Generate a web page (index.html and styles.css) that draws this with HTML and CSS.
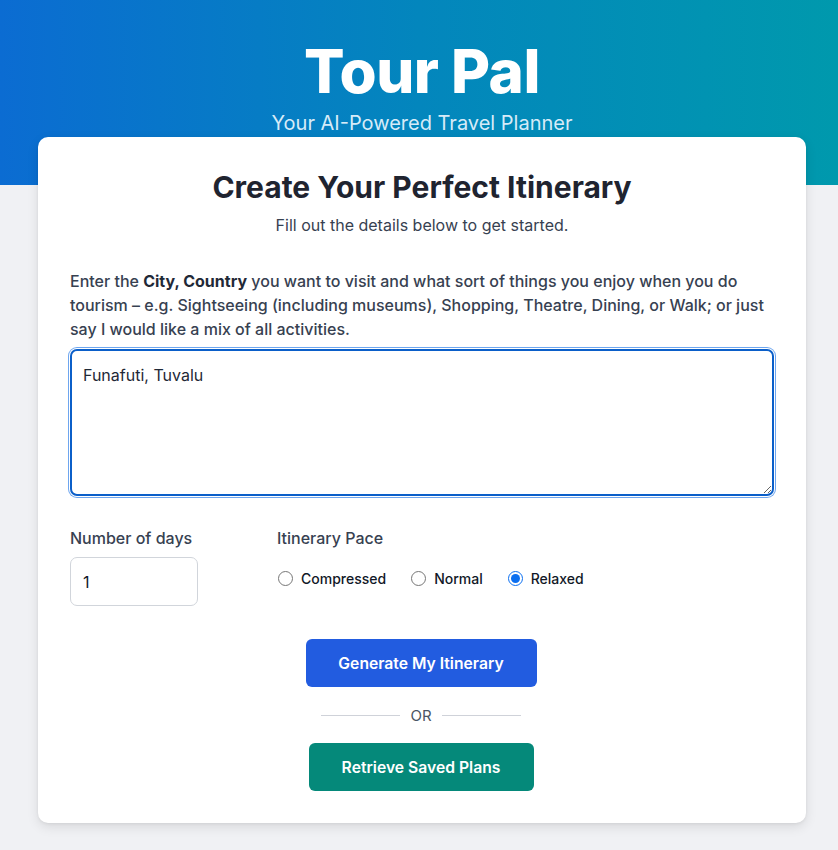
FILE: index.html
```html
<!DOCTYPE html>
<html lang="en">
<head>
<meta charset="utf-8">
<title>Tour Pal</title>
<link rel="stylesheet" href="styles.css">
</head>
<body>
<header class="hero">
  <h1 class="brand">Tour Pal</h1>
  <p class="tagline">Your AI-Powered Travel Planner</p>
</header>
<main class="card">
  <h2 class="card-title">Create Your Perfect Itinerary</h2>
  <p class="card-sub">Fill out the details below to get started.</p>
  <label class="prompt" for="dest">Enter the <strong>City, Country</strong> you want to visit and what sort of things you enjoy when you do tourism – e.g. Sightseeing (including museums), Shopping, Theatre, Dining, or Walk; or just say I would like a mix of all activities.</label>
  <textarea id="dest" class="dest">Funafuti, Tuvalu</textarea>
  <div class="options">
    <div class="field days">
      <label class="field-label" for="days">Number of days</label>
      <input id="days" class="days-input" type="text" value="1">
    </div>
    <div class="field pace">
      <span class="field-label">Itinerary Pace</span>
      <div class="radios">
        <label class="radio"><input type="radio" name="pace"> Compressed</label>
        <label class="radio"><input type="radio" name="pace"> Normal</label>
        <label class="radio"><input type="radio" name="pace" checked> Relaxed</label>
      </div>
    </div>
  </div>
  <div class="actions">
    <button class="btn btn-primary">Generate My Itinerary</button>
    <div class="or"><span class="or-line"></span><span class="or-text">OR</span><span class="or-line"></span></div>
    <button class="btn btn-teal">Retrieve Saved Plans</button>
  </div>
</main>
</body>
</html>
```
FILE: styles.css
```css
* { box-sizing: border-box; }
html, body { margin: 0; padding: 0; }
body {
  background: #f0f1f4;
  font-family: Inter, "Noto Sans", sans-serif;
  color: #1f2937;
  min-height: 850px;
}
.hero {
  background: linear-gradient(90deg, #0b6cd2 0%, #0386bd 50%, #0099ad 100%);
  height: 185px;
  text-align: center;
  padding: 38px 0 0 6px;
}
.brand {
  margin: 0;
  color: #fff;
  font-size: 60px;
  font-weight: 800;
  line-height: 66px;
  letter-spacing: -0.5px;
}
.tagline {
  margin: 5px 0 0;
  color: #d6ebf8;
  font-size: 20px;
  line-height: 28px;
}
.card {
  position: relative;
  width: 768px;
  margin: -48px 0 0 38px;
  background: #fff;
  border-radius: 10px;
  box-shadow: 0 4px 12px rgba(0,0,0,0.10), 0 1px 3px rgba(0,0,0,0.06);
  padding: 32px 32px 32px;
}
.card-title {
  margin: 0;
  text-align: center;
  font-size: 30px;
  font-weight: 700;
  line-height: 36px;
  color: #1f2430;
}
.card-sub {
  margin: 8px 0 0;
  text-align: center;
  font-size: 16px;
  line-height: 24px;
  color: #374151;
}
.prompt {
  display: block;
  margin-top: 32px;
  font-size: 16px;
  line-height: 24px;
  font-weight: 500;
  color: #374151;
}
.prompt strong { font-weight: 700; color: #1f2937; }
.dest {
  display: block;
  width: 100%;
  height: 147px;
  margin-top: 8px;
  padding: 12px 11px;
  font-family: Inter, "Noto Sans", sans-serif;
  font-size: 16px;
  line-height: 24px;
  color: #1f2937;
  border: 2px solid #0b5fc9;
  border-radius: 7px;
  box-shadow: 0 0 0 1px #fff, 0 0 0 2px #6ea6ef;
  outline: none;
  resize: vertical;
}
.options {
  display: flex;
  gap: 79px;
  margin-top: 32px;
}
.field { display: flex; flex-direction: column; }
.field-label {
  font-size: 16px;
  line-height: 20px;
  font-weight: 500;
  color: #374151;
}
.days-input {
  margin-top: 9px;
  width: 128px;
  height: 49px;
  padding: 0 12px;
  font-family: Inter, "Noto Sans", sans-serif;
  font-size: 16px;
  color: #111827;
  border: 1px solid #d1d5db;
  border-radius: 7px;
}
.radios {
  display: flex;
  gap: 24px;
  margin-top: 22px;
}
.radio {
  display: flex;
  align-items: center;
  gap: 8px;
  font-size: 14px;
  font-weight: 500;
  color: #111827;
}
.radio input {
  margin: 0 0 0 1px;
  width: 15px;
  height: 15px;
  accent-color: #0b6ff0;
}
.actions {
  display: flex;
  flex-direction: column;
  align-items: center;
  margin-top: 33px;
}
.btn {
  border: none;
  border-radius: 6px;
  color: #fff;
  font-family: Inter, "Noto Sans", sans-serif;
  font-size: 15.7px;
  font-weight: 600;
  height: 48px;
  cursor: pointer;
}
.btn-primary { background: #225ce0; width: 231px; margin-left: -2px; }
.btn-teal { background: #05897a; width: 225px; margin-left: -2px; }
.or {
  display: flex;
  align-items: center;
  gap: 10px;
  margin: 16px 0;
  height: 24px;
  margin-left: -2px;
}
.or-line { width: 79px; height: 1px; background: #cfd2d9; }
.or-text { font-size: 15px; color: #4b5563; }
```
